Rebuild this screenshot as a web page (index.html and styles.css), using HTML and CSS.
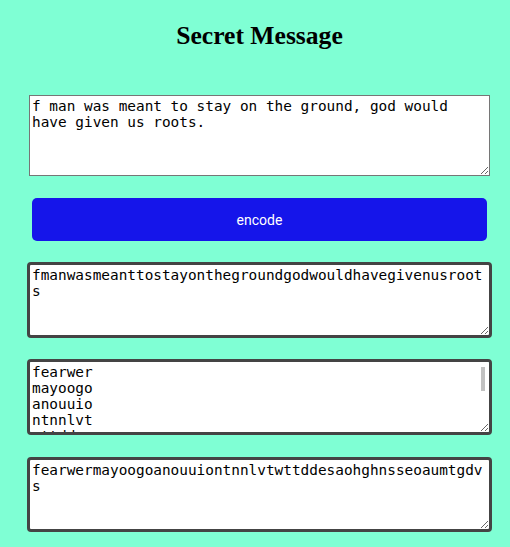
FILE: index.html
```html
<!DOCTYPE html>
<html>
<head>
<meta charset="utf-8">
<title>Secret Message</title>
<link rel="stylesheet" href="styles.css">
</head>
<body>
<main class="app">
  <h1 class="title">Secret Message</h1>
  <textarea class="input">f man was meant to stay on the ground, god would have given us roots.</textarea>
  <button class="encode">encode</button>
  <textarea class="output">fmanwasmeanttostayonthegroundgodwouldhavegivenusroots</textarea>
  <div class="grid-wrap">
    <textarea class="output grid">fearwer
mayoogo
anouuio
ntnnlvt
wttddes
aohghns
seoaumt
gdvs</textarea>
    <span class="thumb"></span>
  </div>
  <textarea class="output last">fearwermayoogoanouuiontnnlvtwttddesaohghnsseoaumtgdvs</textarea>
</main>
</body>
</html>
```
FILE: styles.css
```css
html, body {
  margin: 0;
  padding: 0;
  background: #7fffd4;
}

.app {
  width: 481px;
  margin-left: 19px;
  display: flex;
  flex-direction: column;
  align-items: stretch;
}

.title {
  margin: 21px 0 44px;
  font-family: "Liberation Serif", serif;
  font-weight: bold;
  font-size: 25.6px;
  line-height: 30px;
  text-align: center;
  color: #000;
}

textarea {
  box-sizing: border-box;
  font-family: "DejaVu Sans Mono", monospace;
  font-size: 14.4px;
  line-height: 16px;
  padding: 2px;
  color: #000;
  background: #fff;
  resize: both;
}

.input {
  margin: 0 10px;
  height: 81px;
  border: 1px solid #767676;
}

.encode {
  margin: 22px 13px 21px;
  height: 43px;
  border: none;
  border-radius: 5px;
  background: #1515ea;
  color: #fff;
  font-family: Roboto, "Liberation Sans", sans-serif;
  font-size: 14px;
}

.output {
  margin: 0 8px 21px;
  height: 76px;
  border: 3px solid #444;
  border-radius: 4px;
}

.grid-wrap {
  position: relative;
  display: flex;
  flex-direction: column;
  margin: 0 8px 22px;
}

.grid-wrap .grid {
  margin: 0;
  width: 100%;
}

.thumb {
  position: absolute;
  top: 8px;
  right: 7px;
  width: 4px;
  height: 24px;
  background: #c1c1c1;
}

.output.last {
  height: 75px;
  margin-bottom: 0;
}
```
